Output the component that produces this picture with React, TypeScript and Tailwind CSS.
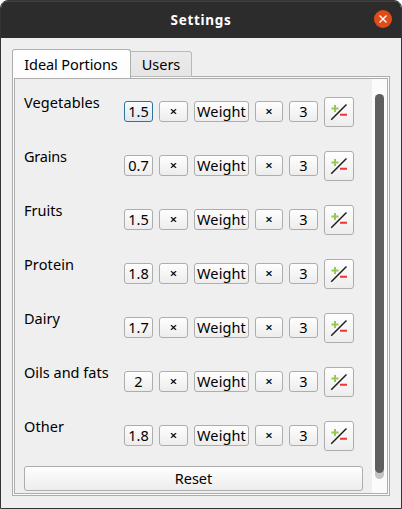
import React from 'react';

type Portion = { name: string; amount: string; tracking: string };

const portions: Portion[] = [
  { name: 'Vegetables', amount: '1.5', tracking: 'tracking-[0.1px]' },
  { name: 'Grains', amount: '0.7', tracking: 'tracking-[-0.2px]' },
  { name: 'Fruits', amount: '1.5', tracking: 'tracking-[0px]' },
  { name: 'Protein', amount: '1.8', tracking: 'tracking-[0.1px]' },
  { name: 'Dairy', amount: '1.7', tracking: 'tracking-[0px]' },
  { name: 'Oils and fats', amount: '2', tracking: 'tracking-[0px]' },
  { name: 'Other', amount: '1.8', tracking: 'tracking-[0.1px]' },
];

const face =
  'flex shrink-0 items-center justify-center whitespace-nowrap rounded-[3px] border bg-linear-to-b leading-none';
const plain = 'border-[#adadad] from-[#fefefe] to-[#ededed]';
const focused = 'border-[#30719f] from-[#f9fbfd] to-[#dfe8ef]';

function PlusMinus() {
  return (
    <svg width="18" height="18" viewBox="0 0 18 18" fill="none">
      <path d="M1.5 5.5h7M5 2v7" stroke="#92cb4f" strokeWidth="2" />
      <path d="M10 11.7h7" stroke="#ef3535" strokeWidth="2" />
      <path d="M1.2 16.8 16.5 1.5" stroke="#202020" strokeWidth="1.5" />
    </svg>
  );
}

function Row({ item, first }: { item: Portion; first: boolean }) {
  return (
    <div className="flex h-[54px] items-start">
      <div className={`-mt-[5px] w-[100px] whitespace-nowrap leading-5 ${item.tracking}`}>{item.name}</div>
      <div className="flex items-start gap-1.5">
        <div className="mt-1 flex gap-1.5">
          <button className={`${face} ${first ? focused : plain} h-[21px] w-[29px]`}>{item.amount}</button>
          <button className={`${face} ${plain} h-[21px] w-[29px] text-[13px] font-semibold`}>×</button>
          <button className={`${face} ${plain} h-[21px] w-[55px] tracking-[0.1px]`}>Weight</button>
          <button className={`${face} ${plain} h-[21px] w-[28px] text-[13px] font-semibold`}>×</button>
          <button className={`${face} ${plain} h-[21px] w-[29px]`}>3</button>
        </div>
        <button className={`${face} ${plain} h-[30px] w-[30px]`} aria-label="Adjust">
          <PlusMinus />
        </button>
      </div>
    </div>
  );
}

export default function App() {
  return (
    <div className="h-[509px] w-[402px] bg-white">
      <div className="flex h-full flex-col overflow-hidden rounded-t-[8px] border border-[#343434] bg-[#efefef] font-['Noto_Sans',sans-serif] text-[14.5px] text-black">
        <header className="grid h-[37px] shrink-0 grid-cols-[32px_1fr_32px] items-center border-t border-[#414141] bg-[#2c2c2c]">
          <span />
          <h1 className="text-center text-[13.5px] font-bold tracking-[0.7px] text-white">Settings</h1>
          <button className="-mt-0.5 ml-[5px] flex h-[18px] w-[18px] items-center justify-center rounded-full bg-[#e04b17]" aria-label="Close">
            <svg width="8" height="8" viewBox="0 0 8 8">
              <path d="m.5.5 7 7m0-7-7 7" stroke="#fff" strokeWidth="1.4" />
            </svg>
          </button>
        </header>
        <main className="flex flex-col px-[11px] pt-[11px]">
          <div className="relative z-10 -mb-0.5 flex h-[29px] items-start">
            <div className="flex h-[29px] w-[119px] items-center justify-center whitespace-nowrap rounded-t-[3px] border border-b-0 border-[#adadad] bg-linear-to-b from-white to-[#fcfcfc] pr-px pt-px tracking-[-0.1px]">
              Ideal Portions
            </div>
            <div className="mt-0.5 flex h-[26px] w-[61px] items-center justify-center rounded-tr-[3px] border border-l-0 border-[#b9b9b9] bg-linear-to-b from-[#ebebeb] to-[#e5e5e5] pt-0.5">
              Users
            </div>
          </div>
          <section className="h-[420px] border border-[#adadad] bg-[#fafafa] p-px">
            <div className="flex h-full border border-[#adadad] bg-[#efefef]">
              <div className="flex w-[357px] flex-col pl-[9px] pt-[18px]">
                {portions.map((item, i) => (
                  <Row key={item.name} item={item} first={i === 0} />
                ))}
                <button className={`${face} ${plain} -mt-[9px] h-[25px] w-[339px]`}>Reset</button>
              </div>
              <div className="flex flex-1 justify-center bg-[#fbfbfb] pt-[15px]">
                <div className="h-[385px] w-[9px] rounded-full bg-[#c4c4c4]">
                  <div className="h-[379px] rounded-full bg-[#5f5f5f]" />
                </div>
              </div>
            </div>
          </section>
        </main>
      </div>
    </div>
  );
}
